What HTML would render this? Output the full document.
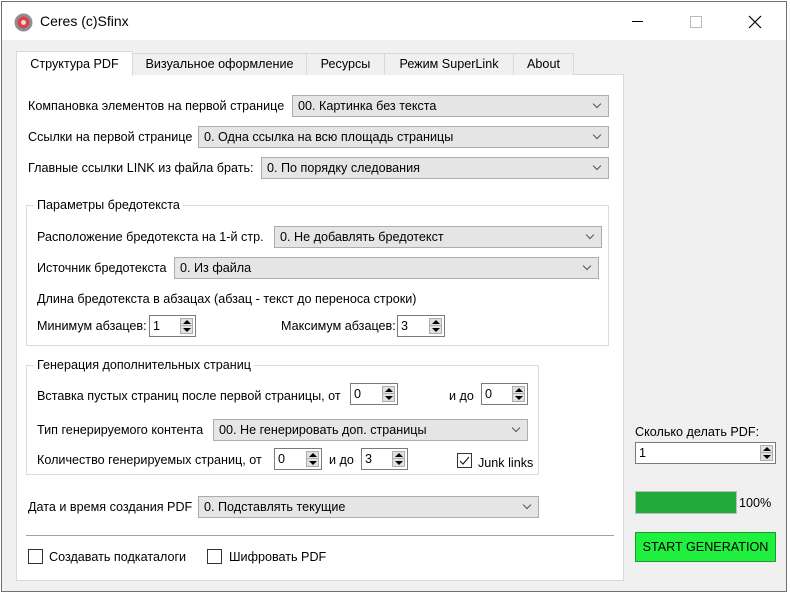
<!DOCTYPE html>
<html><head><meta charset="utf-8"><style>
*{box-sizing:border-box;margin:0;padding:0}
body{width:790px;height:594px;background:#fff;font-family:"Liberation Sans",sans-serif;font-size:12.6px;color:#000;position:relative;overflow:hidden}
.a{position:absolute;white-space:nowrap}
.win{position:absolute;left:1px;top:1px;width:786px;height:591px;border:1px solid #707070;background:#f0f0f0}
.tb{position:absolute;left:2px;top:2px;width:784px;height:38px;background:#fff}
.lbl{position:absolute;white-space:nowrap;line-height:14px}
.cb{position:absolute;height:22px;background:#e5e5e5;border:1px solid #adadad;padding-left:5px;line-height:20px}
.cb:after{content:"";position:absolute;right:8px;top:5px;width:5px;height:5px;border-right:1px solid #555;border-bottom:1px solid #555;transform:rotate(45deg)}
.sp{position:absolute;height:22px;background:#fff;border:1px solid #7a7a7a;padding-left:3px;line-height:20px}
.sp i{position:absolute;right:2px;top:2px;width:13px;height:16px;border:1px solid #adadad;background:#e1e1e1}
.sp i:before{content:"";position:absolute;left:2px;top:1px;border-left:4px solid transparent;border-right:4px solid transparent;border-bottom:4px solid #000}
.sp i:after{content:"";position:absolute;left:2px;bottom:1px;border-left:4px solid transparent;border-right:4px solid transparent;border-top:4px solid #000}
.sp i b{position:absolute;left:0;right:0;top:6px;height:1px;background:#adadad}
.gb{position:absolute;border:1px solid #dcdcdc}
.gt{position:absolute;background:#fff;padding:0 3px;line-height:14px}
.chk{position:absolute;width:15px;height:15px;border:1px solid #333;background:#fff}
.tab{position:absolute;top:53px;height:22px;background:#f0f0f0;border:1px solid #d9d9d9;border-bottom:none;text-align:center;line-height:21px}
</style></head><body>
<div class="win"></div>
<div class="tb"></div>
<svg class="a" style="left:14px;top:13px" width="19" height="19"><circle cx="9.5" cy="9.5" r="9" fill="#8a9299"/><circle cx="9.5" cy="9.5" r="6" fill="#e04040"/><circle cx="9.5" cy="9.5" r="2.5" fill="#ddd"/></svg>
<div class="a" style="left:40px;top:13px;font-size:14px">Ceres (c)Sfinx</div>
<div class="a" style="left:632px;top:21px;width:11px;height:1px;background:#000"></div>
<div class="a" style="left:690px;top:16px;width:12px;height:12px;border:1px solid #bbb"></div>
<svg class="a" style="left:748px;top:15px" width="14" height="14"><path d="M1 1L13 13M13 1L1 13" stroke="#000" stroke-width="1.2"/></svg>

<div class="a" style="left:16px;top:74px;width:608px;height:507px;background:#fff;border:1px solid #d9d9d9"></div>
<div class="tab" style="left:132px;width:175px">Визуальное оформление</div>
<div class="tab" style="left:306px;width:79px">Ресурсы</div>
<div class="tab" style="left:384px;width:130px">Режим SuperLink</div>
<div class="tab" style="left:513px;width:61px">About</div>
<div class="tab" style="left:16px;top:51px;height:25px;width:117px;background:#fff;line-height:24px">Структура PDF</div>

<div class="lbl" style="left:28px;top:99px">Компановка элементов на первой странице</div>
<div class="cb" style="left:292px;top:95px;width:317px">00. Картинка без текста</div>
<div class="lbl" style="left:28px;top:130px">Ссылки на первой странице</div>
<div class="cb" style="left:198px;top:126px;width:411px">0. Одна ссылка на всю площадь страницы</div>
<div class="lbl" style="left:28px;top:161px">Главные ссылки LINK из файла брать:</div>
<div class="cb" style="left:261px;top:157px;width:348px">0. По порядку следования</div>

<div class="gb" style="left:26px;top:205px;width:583px;height:141px"></div>
<div class="gt" style="left:34px;top:198px">Параметры бредотекста</div>
<div class="lbl" style="left:37px;top:230px">Расположение бредотекста на 1-й стр.</div>
<div class="cb" style="left:274px;top:226px;width:328px">0. Не добавлять бредотекст</div>
<div class="lbl" style="left:37px;top:261px">Источник бредотекста</div>
<div class="cb" style="left:174px;top:257px;width:425px">0. Из файла</div>
<div class="lbl" style="left:37px;top:292px">Длина бредотекста в абзацах (абзац - текст до переноса строки)</div>
<div class="lbl" style="left:37px;top:319px">Минимум абзацев:</div>
<div class="sp" style="left:149px;top:315px;width:47px">1<i><b></b></i></div>
<div class="lbl" style="left:281px;top:319px">Максимум абзацев:</div>
<div class="sp" style="left:397px;top:315px;width:48px">3<i><b></b></i></div>

<div class="gb" style="left:26px;top:365px;width:513px;height:110px"></div>
<div class="gt" style="left:34px;top:358px">Генерация дополнительных страниц</div>
<div class="lbl" style="left:37px;top:389px">Вставка пустых страниц после первой страницы, от</div>
<div class="sp" style="left:350px;top:383px;width:48px">0<i><b></b></i></div>
<div class="lbl" style="left:449px;top:389px">и до</div>
<div class="sp" style="left:481px;top:383px;width:47px">0<i><b></b></i></div>
<div class="lbl" style="left:37px;top:423px">Тип генерируемого контента</div>
<div class="cb" style="left:213px;top:419px;width:315px">00. Не генерировать доп. страницы</div>
<div class="lbl" style="left:37px;top:453px">Количество генерируемых страниц, от</div>
<div class="sp" style="left:274px;top:448px;width:48px">0<i><b></b></i></div>
<div class="lbl" style="left:329px;top:453px">и до</div>
<div class="sp" style="left:361px;top:448px;width:47px">3<i><b></b></i></div>
<div class="chk" style="left:457px;top:453px"><svg width="13" height="13" style="position:absolute;left:0;top:0"><path d="M2 7L5 10L11 3" stroke="#222" fill="none" stroke-width="1.2"/></svg></div>
<div class="lbl" style="left:478px;top:456px">Junk links</div>

<div class="lbl" style="left:28px;top:500px">Дата и время создания PDF</div>
<div class="cb" style="left:198px;top:496px;width:341px">0. Подставлять текущие</div>
<div class="a" style="left:26px;top:535px;width:588px;height:1px;background:#a0a0a0"></div>
<div class="chk" style="left:28px;top:549px"></div>
<div class="lbl" style="left:49px;top:550px">Создавать подкаталоги</div>
<div class="chk" style="left:207px;top:549px"></div>
<div class="lbl" style="left:229px;top:550px">Шифровать PDF</div>

<div class="lbl" style="left:635px;top:425px">Сколько делать PDF:</div>
<div class="sp" style="left:635px;top:442px;width:141px">1<i><b></b></i></div>
<div class="a" style="left:635px;top:491px;width:102px;height:23px;background:#22aa3a;border:1px solid #bcbcbc"></div>
<div class="lbl" style="left:739px;top:496px">100%</div>
<div class="a" style="left:635px;top:532px;width:141px;height:30px;background:#22f040;border:1px solid #1a9a2a;text-align:center;line-height:28px">START GENERATION</div>
</body></html>
